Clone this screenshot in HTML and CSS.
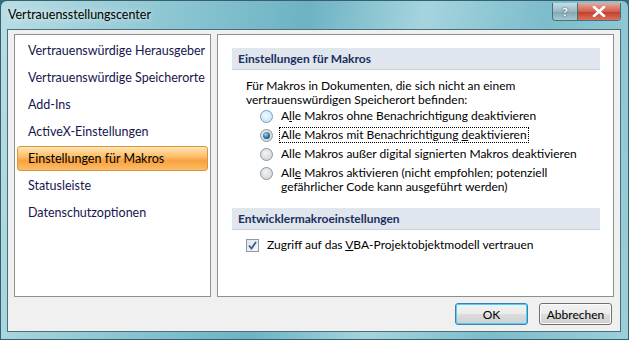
FILE: index.html
```html
<!DOCTYPE html>
<html lang="de">
<head>
    <meta charset="UTF-8">
    <title>Vertrauensstellungscenter</title>
    <link rel="stylesheet" href="styles.css">
</head>
<body>
    <div class="window">
        <div class="titlebar">
            <span class="title">Vertrauensstellungscenter</span>
            <div class="caption-buttons">
                <div class="cap-btn help">?</div>
                <div class="cap-btn close">
                    <svg width="14" height="11" viewBox="0 0 14 11">
                        <path d="M2 1 L12 10 M12 1 L2 10" stroke="#fff" stroke-width="2.6" stroke-linecap="round"/>
                    </svg>
                </div>
            </div>
        </div>

        <div class="client">
            <div class="panes">
                <ul class="nav">
                    <li>Vertrauenswürdige Herausgeber</li>
                    <li>Vertrauenswürdige Speicherorte</li>
                    <li>Add-Ins</li>
                    <li>ActiveX-Einstellungen</li>
                    <li class="selected">Einstellungen für Makros</li>
                    <li>Statusleiste</li>
                    <li>Datenschutzoptionen</li>
                </ul>

                <div class="content">
                    <div class="section-head">Einstellungen für Makros</div>
                    <div class="section-body">
                        <p class="intro">Für Makros in Dokumenten, die sich nicht an einem<br>vertrauenswürdigen Speicherort befinden:</p>
                        <div class="options">
                            <div class="option">
                                <span class="radio"></span>
                                <span class="label">A<u>l</u>le Makros ohne Benachrichtigung deaktivieren</span>
                            </div>
                            <div class="option">
                                <span class="radio checked"></span>
                                <span class="label focused">Alle Makros mit Benachrichtigung <u>d</u>eaktivieren</span>
                            </div>
                            <div class="option">
                                <span class="radio"></span>
                                <span class="label">Alle Makros außer di<u>g</u>ital signierten Makros deaktivieren</span>
                            </div>
                            <div class="option">
                                <span class="radio"></span>
                                <span class="label">All<u>e</u> Makros aktivieren (nicht empfohlen; potenziell<br>gefährlicher Code kann ausgeführt werden)</span>
                            </div>
                        </div>
                    </div>

                    <div class="section-head">Entwicklermakroeinstellungen</div>
                    <div class="section-body">
                        <div class="check-row">
                            <span class="checkbox">
                                <svg width="9" height="9" viewBox="0 0 9 9">
                                    <path d="M1 4.5 L3.5 7.5 L8 1" fill="none" stroke="#3c5a98" stroke-width="1.8"/>
                                </svg>
                            </span>
                            <span class="label">Zugriff auf das <u>V</u>BA-Projektobjektmodell vertrauen</span>
                        </div>
                    </div>
                </div>
            </div>

            <div class="footer">
                <button class="btn default">OK</button>
                <button class="btn">Abbrechen</button>
            </div>
        </div>
    </div>
</body>
</html>
```

FILE: styles.css
```css
* {
    margin: 0;
    padding: 0;
    box-sizing: border-box;
}

body {
    width: 629px;
    height: 340px;
    overflow: hidden;
    background: #2f6f7e;
    font-family: Lato, "Noto Sans", sans-serif;
    font-size: 12px;
    color: #000;
    white-space: nowrap;
}

.window {
    width: 629px;
    height: 340px;
    display: flex;
    flex-direction: column;
    border-radius: 7px 7px 0 0;
    border: 1px solid #36606b;
    background: linear-gradient(100deg, #b9dde4 0%, #8cc6d2 25%, #6db3c4 45%, #a5d4de 62%, #7cbccb 80%, #9ccfd9 100%);
}

.titlebar {
    height: 28px;
    display: flex;
    align-items: flex-start;
    justify-content: space-between;
    padding: 0 7px 0 7px;
}

.title {
    margin-top: 6px;
    font-size: 12.5px;
    color: #000;
    text-shadow: 0 0 6px rgba(255, 255, 255, 0.9);
}

.caption-buttons {
    display: flex;
    margin-top: 2px;
    border: 1px solid #47707c;
    border-top: none;
    border-radius: 0 0 4px 4px;
    overflow: hidden;
}

.cap-btn {
    height: 17px;
    display: flex;
    align-items: center;
    justify-content: center;
}

.cap-btn.help {
    width: 25px;
    background: linear-gradient(#c6dde4, #96b9c4 50%, #7ea6b3 51%, #a8c8d0);
    color: #fff;
    font-weight: bold;
    font-size: 12px;
    text-shadow: 0 0 2px #335;
    border-right: 1px solid #47707c;
}

.cap-btn.close {
    width: 42px;
    background: linear-gradient(#e8a89c, #d0604f 50%, #c23b28 51%, #d9725e);
}

.client {
    flex: 1;
    margin: 0 7px 7px 6px;
    background: #f0f0f0;
    border: 1px solid #4b6f79;
    display: flex;
    flex-direction: column;
}

.panes {
    display: flex;
    gap: 6px;
    padding: 4px 6px 0 6px;
    height: 267px;
}

.nav {
    width: 197px;
    list-style: none;
    background: #fff;
    border: 1px solid #8e8f8f;
    padding: 3px 2px 0 2px;
    display: flex;
    flex-direction: column;
    gap: 2px;
}

.nav li {
    height: 25px;
    line-height: 23px;
    padding-left: 10px;
    font-size: 12.5px;
    color: #15154e;
    border: 1px solid transparent;
    border-radius: 3px;
}

.nav li.selected {
    color: #000;
    border-color: #d9963a;
    background: linear-gradient(#fee4b4 0%, #fdc576 35%, #f9a13e 60%, #fbbd6a 100%);
}

.content {
    flex: 1;
    background: #fff;
    border: 1px solid #8e8f8f;
    padding: 13px 13px 0 14px;
}

.section-head {
    height: 22px;
    line-height: 21px;
    padding-left: 6px;
    background: #dfe6ee;
    border-bottom: 1px solid #c9d3dd;
    color: #1c2f5c;
    font-weight: bold;
}

.section-body {
    padding: 9px 0 14px 14px;
}

.intro {
    line-height: 14px;
}

.options {
    margin-top: 2px;
    padding-left: 14px;
    display: flex;
    flex-direction: column;
    gap: 5px;
}

.option {
    display: flex;
    align-items: flex-start;
    gap: 7px;
}

.label {
    line-height: 14px;
    padding: 0 1px;
}

.label.focused {
    outline: 1px dotted #000;
}

.radio {
    width: 13px;
    height: 13px;
    margin-top: 1px;
    border-radius: 50%;
    border: 1px solid #8a96a3;
    background: radial-gradient(circle at 45% 40%, #f4f4f4, #d6dade 70%, #c2c8ce);
    display: flex;
    align-items: center;
    justify-content: center;
}

.option:first-child .radio {
    border-color: #6c9ec4;
    background: radial-gradient(circle at 45% 40%, #f4f9fd, #cfe5f5 70%, #b2d2ea);
}

.radio.checked::after {
    content: "";
    width: 7px;
    height: 7px;
    border-radius: 50%;
    background: radial-gradient(circle at 40% 35%, #a3d7f4, #2a6d97 55%, #0f3f60);
}

.check-row {
    display: flex;
    align-items: center;
    gap: 7px;
    margin-top: -1px;
}

.checkbox {
    width: 13px;
    height: 13px;
    border: 1px solid #8e9aa6;
    background: linear-gradient(135deg, #dfe3e8, #f7f8f9);
    display: flex;
    align-items: center;
    justify-content: center;
}

.footer {
    flex: 1;
    display: flex;
    justify-content: flex-end;
    align-items: center;
    gap: 11px;
    padding-right: 8px;
}

.btn {
    width: 73px;
    height: 22px;
    font-family: inherit;
    font-size: 12px;
    color: #000;
    border: 1px solid #707070;
    border-radius: 3px;
    background: linear-gradient(#f2f2f2 0%, #ebebeb 49%, #dddddd 50%, #cfcfcf 100%);
    box-shadow: inset 0 0 0 1px #fcfcfc;
}

.btn.default {
    border-color: #3c7fb1;
    box-shadow: inset 0 0 0 1px #48d3fb;
}
```
